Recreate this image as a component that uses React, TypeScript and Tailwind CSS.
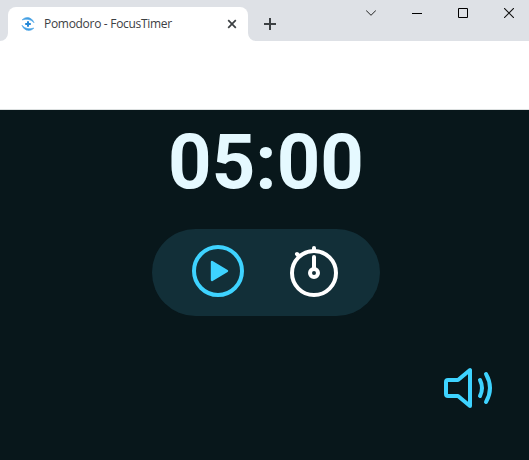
function Favicon() {
  return (
    <svg className="size-4 shrink-0" viewBox="0 0 16 16">
      <path d="M2.2 4C4.500 .8 11.500 0 14 6.800C11.500 3.600 7 2.400 2.200 4Z" fill="#3d9be0" stroke="#58abe8" strokeWidth=".7" />
      <path d="M13.800 12C11.500 15.200 4.500 16 2 9.200C4.500 12.400 9 13.600 13.800 12Z" fill="#3d9be0" stroke="#58abe8" strokeWidth=".7" />
      <path d="M8 5.200v5.600M5.200 8h5.600" stroke="#2488d8" strokeWidth="2" />
    </svg>
  );
}

function TabBar() {
  return (
    <header className="flex h-[41px] bg-[#dee1e6]">
      <svg className="mt-[33px] size-2 shrink-0" viewBox="0 0 8 8">
        <path d="M8 0v8H0a8 8 0 0 0 8-8Z" fill="#fff" />
      </svg>
      <div className="mt-[7px] flex h-[34px] w-[240px] shrink-0 items-center rounded-t-lg bg-white pr-[11px] pl-3">
        <Favicon />
        <span className="ml-2 whitespace-nowrap font-['Open_Sans','Noto_Sans',sans-serif] text-[12px] leading-4 tracking-[-0.3px] text-[#3c4043]">
          Pomodoro - FocusTimer
        </span>
        <svg className="ml-auto size-[10px] shrink-0" viewBox="0 0 10 10" stroke="#3c4043" strokeWidth="1.7">
          <path d="M1.2 1.2l7.6 7.6M8.8 1.2 1.2 8.8" />
        </svg>
      </div>
      <svg className="mt-[33px] size-2 shrink-0" viewBox="0 0 8 8">
        <path d="M0 0v8h8a8 8 0 0 1-8-8Z" fill="#fff" />
      </svg>
      <svg className="mt-[18px] ml-2 size-3 shrink-0" viewBox="0 0 12 12" stroke="#3c4043" strokeWidth="2">
        <path d="M6 0v12M0 6h12" />
      </svg>
      <div className="mt-2 mr-[15px] ml-auto flex h-[10px] gap-9">
        <svg className="size-[10px]" viewBox="0 0 10 10" fill="none" stroke="#222" strokeWidth="1">
          <path d="M0 2.300l5 5 5-5" />
        </svg>
        <svg className="size-[10px]" viewBox="0 0 10 10" fill="#000">
          <path d="M0 5h10v1H0z" />
        </svg>
        <svg className="size-[10px]" viewBox="0 0 10 10" fill="none" stroke="#000">
          <path d="M.5.5h9v9h-9z" />
        </svg>
        <svg className="size-[10px]" viewBox="0 0 10 10" stroke="#111" strokeWidth="1.1">
          <path d="M0 0l10 10M10 0 0 10" />
        </svg>
      </div>
    </header>
  );
}

function PlayIcon() {
  return (
    <svg className="size-16" viewBox="0 0 64 64" fill="none" stroke="#3ed3ff" strokeWidth="4">
      <circle cx="32" cy="32" r="24" />
      <path d="M26 23l15 9-15 9Z" fill="#3ed3ff" strokeWidth="2.4" strokeLinejoin="round" />
    </svg>
  );
}

function StopwatchIcon() {
  return (
    <svg className="size-16" viewBox="0 0 64 64" fill="none" stroke="#fff" strokeWidth="4" strokeLinecap="round">
      <circle cx="32" cy="34" r="22" />
      <circle cx="32" cy="34" r="4" />
      <path d="M32 30V18M32 12V9M17 17l-2-2" />
    </svg>
  );
}

function SoundIcon() {
  return (
    <svg
      className="size-16"
      viewBox="0 0 64 64"
      fill="none"
      stroke="#3ed3ff"
      strokeWidth="4"
      strokeLinecap="round"
      strokeLinejoin="round"
    >
      <path d="M12 24h10l12-10v36L22 40H12a2 2 0 0 1-2-2V26a2 2 0 0 1 2-2Z" />
      <path d="M44 24q4 8 0 16M50 18q8 14 0 28" />
    </svg>
  );
}

export default function App() {
  return (
    <div className="flex h-[460px] w-[529px] flex-col overflow-hidden bg-white">
      <TabBar />
      <div className="h-[69px] border-b border-[#dce0e0] bg-white" />
      <main className="flex flex-1 flex-col items-center bg-[#08171b]">
        <h1 className="mt-[14px] flex h-[76px] items-center pl-[3px] font-['Roboto',sans-serif] text-[76px] leading-none font-bold text-[#e5f9ff]">
          05:00
        </h1>
        <div className="mt-[29px] ml-[152px] flex h-[87px] w-[228px] items-start gap-8 self-start rounded-full bg-[#122f38] pt-[10px] pl-[34px]">
          <button aria-label="Start">
            <PlayIcon />
          </button>
          <button aria-label="Set time">
            <StopwatchIcon />
          </button>
        </div>
        <button aria-label="Sound" className="mt-10 mr-[29px] self-end">
          <SoundIcon />
        </button>
      </main>
    </div>
  );
}
